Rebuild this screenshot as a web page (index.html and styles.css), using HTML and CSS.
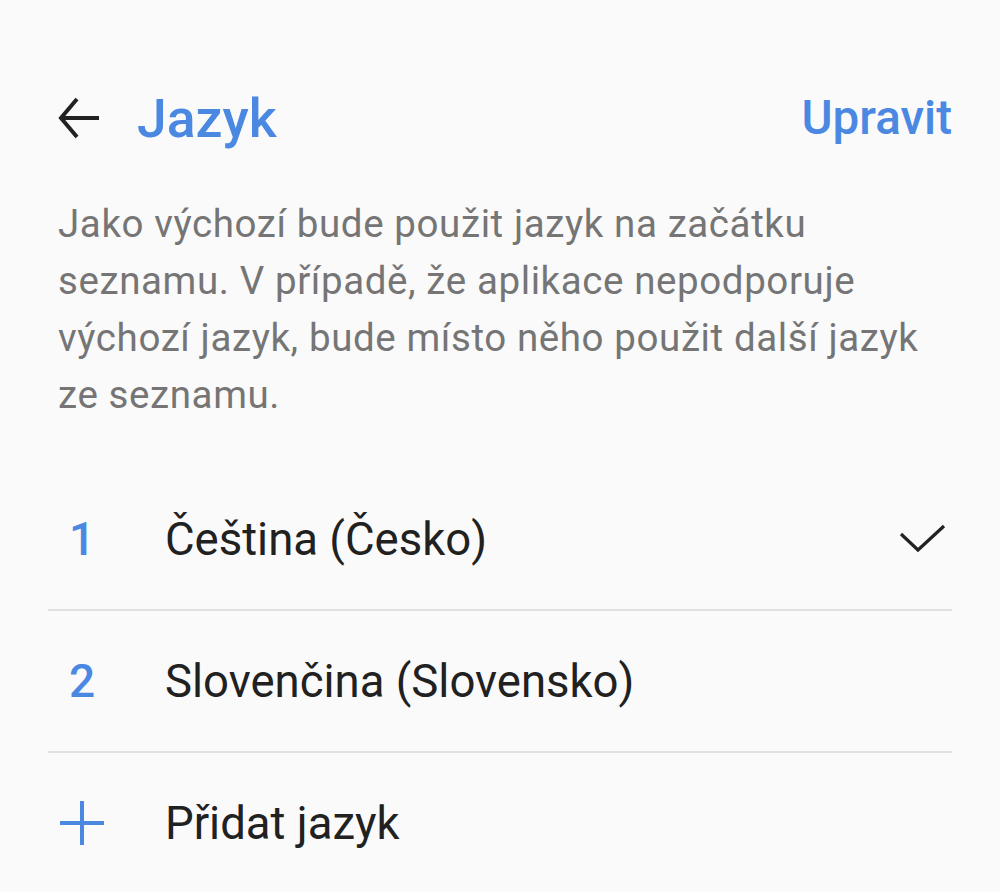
FILE: index.html
```html
<!DOCTYPE html>
<html lang="cs">
<head>
<meta charset="utf-8">
<title>Jazyk</title>
<link rel="stylesheet" href="styles.css">
</head>
<body>
<div class="screen">
  <header class="topbar">
    <div class="lead">
      <svg class="icon-back" width="44" height="44" viewBox="0 0 44 44">
        <path d="M19 3 L3 22 L19 41 M3 22 L41 22" fill="none" stroke="#222" stroke-width="4" stroke-linejoin="miter" stroke-linecap="butt"/>
      </svg>
    </div>
    <h1 class="title">Jazyk</h1>
    <span class="action">Upravit</span>
  </header>
  <p class="desc">Jako výchozí bude použit jazyk na začátku seznamu. V případě, že aplikace nepodporuje výchozí jazyk, bude místo něho použit další jazyk ze seznamu.</p>
  <ul class="list">
    <li class="row">
      <span class="lead num">1</span>
      <span class="label">Čeština (Česko)</span>
      <svg class="check" width="48" height="30" viewBox="0 0 48 30">
        <path d="M2 10 L19 26 L45 2" fill="none" stroke="#222" stroke-width="3.2"/>
      </svg>
    </li>
    <li class="row">
      <span class="lead num">2</span>
      <span class="label">Slovenčina (Slovensko)</span>
    </li>
    <li class="row last">
      <span class="lead">
        <svg width="46" height="46" viewBox="0 0 46 46">
          <path d="M23 1 V45 M1 23 H45" fill="none" stroke="#4a88e2" stroke-width="4"/>
        </svg>
      </span>
      <span class="label">Přidat jazyk</span>
    </li>
  </ul>
</div>
</body>
</html>
```
FILE: styles.css
```css
html, body {
  margin: 0;
  padding: 0;
  background: #fafafa;
}
body {
  font-family: Roboto, "Noto Sans", "Liberation Sans", sans-serif;
  color: #212121;
}
.screen {
  padding: 0 48px;
  overflow: hidden;
  height: 892px;
}
.topbar {
  display: flex;
  align-items: center;
  margin-top: 80px;
  height: 76px;
}
.lead {
  width: 64px;
  flex: 0 0 64px;
  display: flex;
  align-items: center;
  justify-content: center;
}
.icon-back {
  margin-left: -1px;
}
.title {
  margin: 0 0 0 25px;
  font-size: 53.5px;
  font-weight: 500;
  color: #4a88e2;
  flex: 1;
}
.action {
  font-size: 47.5px;
  font-weight: 500;
  color: #4a88e2;
}
.desc {
  margin: 39px 0 0 10px;
  max-width: 880px;
  font-size: 38.5px;
  letter-spacing: 0.6px;
  line-height: 57px;
  color: #757575;
}
.list {
  list-style: none;
  margin: 46px 0 0;
  padding: 0;
}
.row {
  display: flex;
  align-items: center;
  height: 140px;
  border-bottom: 2px solid #e0e0e0;
}
.row.last {
  border-bottom: none;
}
.row .lead {
  width: 68px;
  flex: 0 0 68px;
}
.num {
  font-size: 46px;
  font-weight: 500;
  color: #4a88e2;
}
.label {
  margin-left: 49px;
  font-size: 45.5px;
  flex: 1;
}
.check {
  margin-right: 5px;
}
```
